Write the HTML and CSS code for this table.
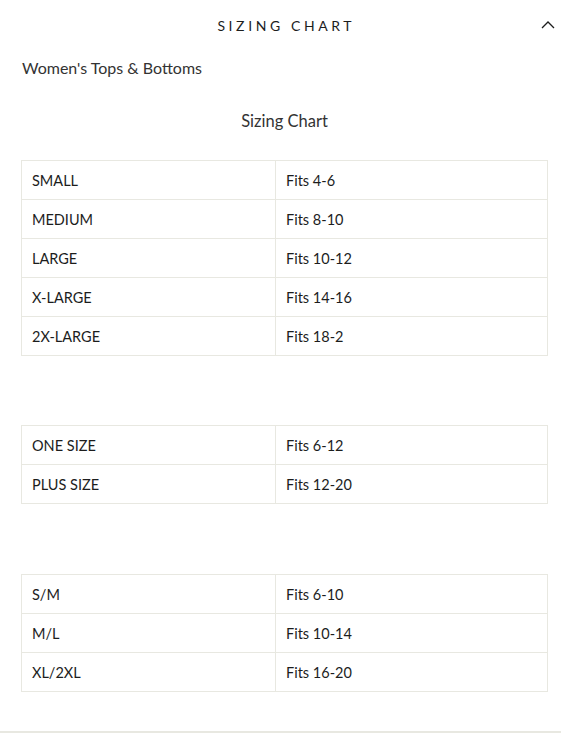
FILE: index.html
```html
<!DOCTYPE html>
<html>
<head>
<meta charset="utf-8">
<link rel="stylesheet" href="styles.css">
</head>
<body>
<div class="page">
  <div class="accordion">
    <div class="acc-header">
      <span class="acc-title">SIZING CHART</span>
      <svg class="chevron" width="14" height="9" viewBox="0 0 14 9"><path d="M1 8 L7 2 L13 8" fill="none" stroke="#1c1d1d" stroke-width="1.3"/></svg>
    </div>
    <div class="acc-body">
      <p class="subtitle">Women's Tops &amp; Bottoms</p>
      <p class="chart-title">Sizing Chart</p>
      <table class="size-table">
        <tr><td class="c1">SMALL</td><td>Fits 4-6</td></tr>
        <tr><td class="c1">MEDIUM</td><td>Fits 8-10</td></tr>
        <tr><td class="c1">LARGE</td><td>Fits 10-12</td></tr>
        <tr><td class="c1">X-LARGE</td><td>Fits 14-16</td></tr>
        <tr><td class="c1">2X-LARGE</td><td>Fits 18-2</td></tr>
      </table>
      <table class="size-table">
        <tr><td class="c1">ONE SIZE</td><td>Fits 6-12</td></tr>
        <tr><td class="c1">PLUS SIZE</td><td>Fits 12-20</td></tr>
      </table>
      <table class="size-table">
        <tr><td class="c1">S/M</td><td>Fits 6-10</td></tr>
        <tr><td class="c1">M/L</td><td>Fits 10-14</td></tr>
        <tr><td class="c1">XL/2XL</td><td>Fits 16-20</td></tr>
      </table>
    </div>
  </div>
</div>
</body>
</html>
```
FILE: styles.css
```css
html, body {
  margin: 0;
  padding: 0;
  background: #fff;
}
body {
  font-family: "Lato", "Liberation Sans", sans-serif;
  color: #1c1d1d;
}
.page {
  width: 561px;
  min-height: 733px;
  box-sizing: border-box;
}
.accordion {
  border-bottom: 3px solid #e8e8e1;
  padding: 0 13px 39px 21px;
}
.acc-header {
  position: relative;
  height: 50px;
  display: flex;
  align-items: center;
  justify-content: center;
}
.acc-title {
  font-size: 14px;
  letter-spacing: 3.6px;
  padding-left: 3.6px;
}
.chevron {
  position: absolute;
  right: -7px;
  top: 20px;
}
.acc-body {
  display: flex;
  flex-direction: column;
}
.subtitle {
  margin: 8px 0 0 1px;
  font-size: 16px;
  line-height: 20px;
  color: #333;
}
.chart-title {
  margin: 33px 0 0 0;
  text-align: center;
  font-size: 16.5px;
  line-height: 20px;
  color: #333;
}
.size-table {
  border-collapse: collapse;
  width: 527px;
  margin-top: 69px;
  font-size: 14.5px;
}
.size-table:last-child {
  margin-top: 70px;
}
.chart-title + .size-table {
  margin-top: 29px;
}
.size-table td {
  border: 1px solid #e8e8e1;
  height: 39px;
  padding: 0 10px;
  box-sizing: border-box;
}
.size-table td.c1 {
  width: 254px;
}
```
